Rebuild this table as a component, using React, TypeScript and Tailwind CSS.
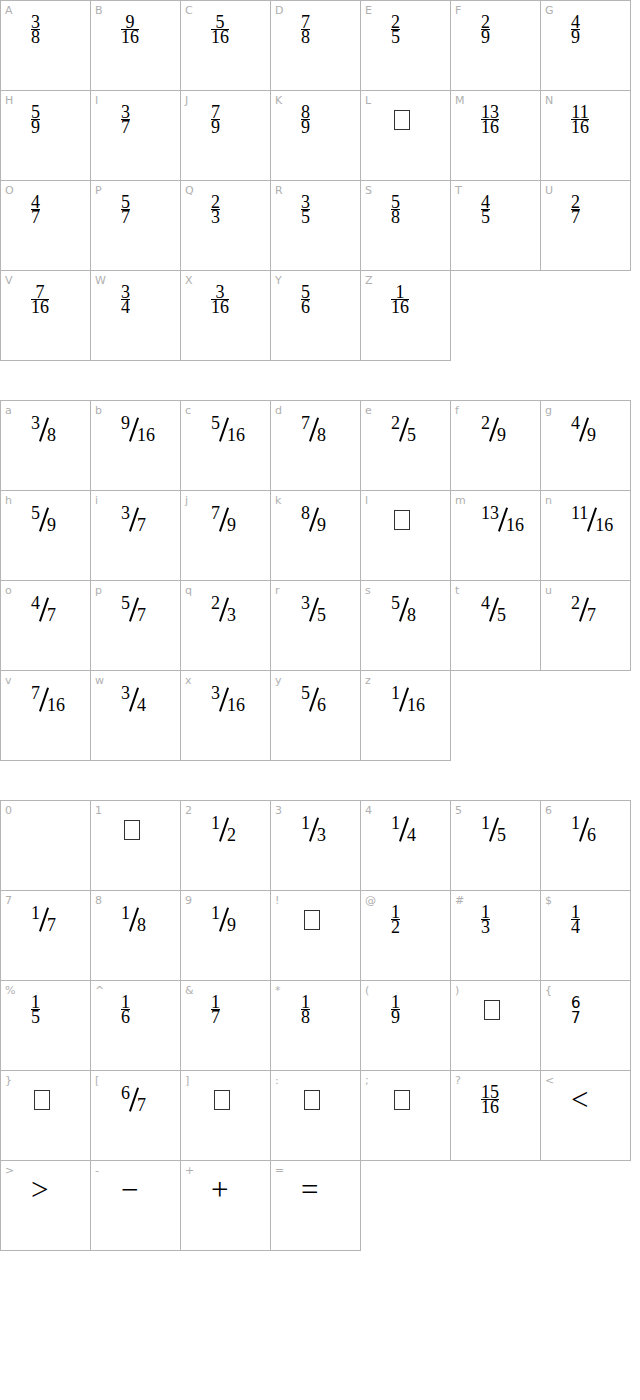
import React from "react";

type Glyph =
  | { k: "stack"; n: string; d: string; sans?: boolean; noLine?: boolean }
  | { k: "diag"; n: string; d: string }
  | { k: "box" }
  | { k: "sym"; c: string }
  | { k: "none" };

type Cell = { label: string; g: Glyph };

const st = (n: string, d: string): Glyph => ({ k: "stack", n, d });
const dg = (n: string, d: string): Glyph => ({ k: "diag", n, d });
const box: Glyph = { k: "box" };

const fracs: [string, string][] = [
  ["3", "8"], ["9", "16"], ["5", "16"], ["7", "8"], ["2", "5"], ["2", "9"], ["4", "9"],
  ["5", "9"], ["3", "7"], ["7", "9"], ["8", "9"], ["", ""], ["13", "16"], ["11", "16"],
  ["4", "7"], ["5", "7"], ["2", "3"], ["3", "5"], ["5", "8"], ["4", "5"], ["2", "7"],
  ["7", "16"], ["3", "4"], ["3", "16"], ["5", "6"], ["1", "16"],
];

const upper = "ABCDEFGHIJKLMNOPQRSTUVWXYZ".split("");

const section1: Cell[] = upper.map((l, i) => ({
  label: l,
  g: fracs[i][0] ? st(fracs[i][0], fracs[i][1]) : box,
}));

const section2: Cell[] = upper.map((l, i) => ({
  label: l.toLowerCase(),
  g: fracs[i][0] ? dg(fracs[i][0], fracs[i][1]) : box,
}));

const section3: Cell[] = [
  { label: "0", g: { k: "none" } },
  { label: "1", g: box },
  { label: "2", g: dg("1", "2") },
  { label: "3", g: dg("1", "3") },
  { label: "4", g: dg("1", "4") },
  { label: "5", g: dg("1", "5") },
  { label: "6", g: dg("1", "6") },
  { label: "7", g: dg("1", "7") },
  { label: "8", g: dg("1", "8") },
  { label: "9", g: dg("1", "9") },
  { label: "!", g: box },
  { label: "@", g: st("1", "2") },
  { label: "#", g: st("1", "3") },
  { label: "$", g: st("1", "4") },
  { label: "%", g: st("1", "5") },
  { label: "^", g: st("1", "6") },
  { label: "&", g: st("1", "7") },
  { label: "*", g: st("1", "8") },
  { label: "(", g: st("1", "9") },
  { label: ")", g: box },
  { label: "{", g: { k: "stack", n: "6", d: "7", sans: true, noLine: true } },
  { label: "}", g: box },
  { label: "[", g: dg("6", "7") },
  { label: "]", g: box },
  { label: ":", g: box },
  { label: ";", g: box },
  { label: "?", g: st("15", "16") },
  { label: "<", g: { k: "sym", c: "<" } },
  { label: ">", g: { k: "sym", c: ">" } },
  { label: "-", g: { k: "sym", c: "\u2212" } },
  { label: "+", g: { k: "sym", c: "+" } },
  { label: "=", g: { k: "sym", c: "=" } },
];

function GlyphView({ g }: { g: Glyph }) {
  if (g.k === "none") return null;

  if (g.k === "box") {
    return (
      <div className="pt-[19px] pl-[3px]">
        <div className="w-[16px] h-[20px] border border-[#333]" />
      </div>
    );
  }

  if (g.k === "sym") {
    return (
      <div className="pt-[14px] text-[31px] leading-[30px] text-black">{g.c}</div>
    );
  }

  if (g.k === "diag") {
    // numerator up-left, fraction slash, denominator down-right
    return (
      <div className="pt-[15px]">
        <div className="flex h-[26px] text-[18px] leading-[14px] text-black">
          <span className="self-start">{g.n}</span>
          <span className="w-[7px] flex justify-center items-center">
            <span className="block h-[25px] w-[1.5px] bg-black rotate-[19deg]" />
          </span>
          <span className="self-end">{g.d}</span>
        </div>
      </div>
    );
  }

  return (
    <div className="pt-[10px]">
      <div
        className={
          g.sans
            ? "inline-flex flex-col items-center text-[15px] leading-[14px] text-black font-['DejaVu_Sans',sans-serif]"
            : "inline-flex flex-col items-center text-[18px] leading-[14px] text-black"
        }
      >
        <span>{g.n}</span>
        <span className={g.noLine ? "self-stretch h-px" : "self-stretch h-px bg-black"} />
        <span>{g.d}</span>
      </div>
    </div>
  );
}

function Grid({ cells }: { cells: Cell[] }) {
  return (
    <div className="grid grid-cols-[repeat(7,90px)] w-[631px] border-l border-t border-[#b5b5b5]">
      {cells.map((c) => (
        <div key={c.label} className="h-[90px] flex border-r border-b border-[#b5b5b5]">
          <div className="w-[30px] shrink-0 pl-[4px] pt-[3px] text-[11px] leading-[14px] text-[#b0b0b0] font-['DejaVu_Sans',sans-serif]">
            {c.label}
          </div>
          <div className="flex-1">
            <GlyphView g={c.g} />
          </div>
        </div>
      ))}
    </div>
  );
}

export default function App() {
  return (
    <div className="bg-white min-h-[1400px] font-['Liberation_Serif',serif]">
      <div className="flex flex-col gap-[39px]">
        <Grid cells={section1} />
        <Grid cells={section2} />
        <Grid cells={section3} />
      </div>
    </div>
  );
}
